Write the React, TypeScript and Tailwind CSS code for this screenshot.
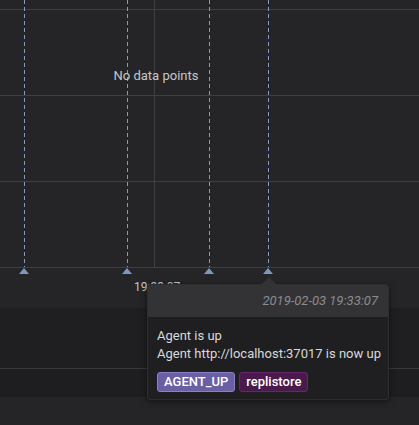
import React from "react";

const hLines = [9, 95, 181, 267];
const markers = [24, 127, 209, 268];

export default function App() {
    return (
        <div className="relative w-[419px] h-[425px] overflow-hidden bg-[#252528] font-['Roboto','Liberation_Sans',sans-serif] text-[13px] text-[#d8d9da]">
            {/* graph canvas */}
            <div className="relative h-[308px]">
                {hLines.map((y) => (
                    <div key={y} className="absolute left-0 right-0 h-px bg-[#3f3f42]" style={{ top: y }} />
                ))}
                <div className="absolute top-0 left-[154px] w-px h-[267px] bg-[#3f3f42]" />
                {markers.map((x) => (
                    <div key={x} className="absolute top-0" style={{ left: x }}>
                        <div className="w-px h-[267px] bg-[repeating-linear-gradient(to_bottom,#7f9cc4_0px,#7f9cc4_4px,transparent_4px,transparent_7px)]" />
                        <div className="absolute top-[268px] left-[-5px] w-0 h-0 border-l-[5px] border-r-[5px] border-b-[6px] border-l-transparent border-r-transparent border-b-[#7b98c0]" />
                    </div>
                ))}
                <div className="absolute top-[66px] left-0 w-[312px] text-center text-[#c7c7c7]">No data points</div>
                <div className="absolute top-[278px] left-[134px] text-[12px] text-[#c7c7c7]">19:33:07</div>
            </div>
            <div className="h-[60px] bg-[#1f1f22]" />
            <div className="h-px bg-[#39393c]" />
            <div className="h-[28px] bg-[#1e1e21]" />

            {/* annotation tooltip */}
            <div className="absolute left-[147px] top-[284px] w-[242px] rounded-[3px] border border-[#2e2e31] bg-[#1f1f21] shadow-[0_2px_6px_rgba(0,0,0,0.5)]">
                <div className="absolute top-[-8px] left-[113px] w-0 h-0 border-l-[8px] border-r-[8px] border-b-[8px] border-l-transparent border-r-transparent border-b-[#333335]" />
                <div className="h-[32px] flex items-center justify-end px-[10px] bg-[#333335] rounded-t-[3px] italic text-[#8c8c8e]">
                    2019-02-03 19:33:07
                </div>
                <div className="px-[9px] pt-[10px] pb-[7px] whitespace-nowrap">
                    <div className="leading-[18px]">Agent is up</div>
                    <div className="leading-[18px]">Agent http://localhost:37017 is now up</div>
                    <div className="flex gap-[4px] mt-[9px]">
                        <span className="h-[20px] flex items-center px-[6px] rounded-[3px] border border-[#8a80c6] bg-[#6a5fa5] text-white font-medium">AGENT_UP</span>
                        <span className="h-[20px] flex items-center px-[6px] rounded-[3px] border border-[#652866] bg-[#4b1a4c] text-white font-medium">replistore</span>
                    </div>
                </div>
            </div>
        </div>
    );
}
